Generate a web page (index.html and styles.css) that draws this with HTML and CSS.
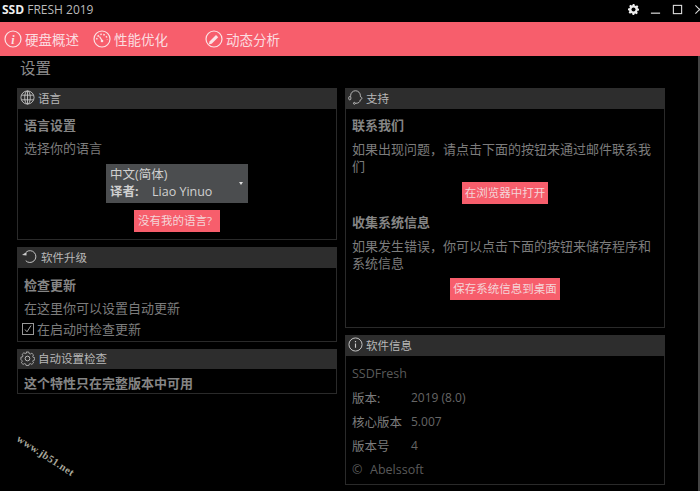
FILE: index.html
```html
<!DOCTYPE html>
<html lang="zh">
<head>
<meta charset="utf-8">
<title>SSD FRESH 2019</title>
<link rel="stylesheet" href="styles.css">
</head>
<body>
<header class="titlebar">
  <div class="title"><b>SSD</b> FRESH 2019</div>
  <div class="winctl">
    <svg class="wi" viewBox="0 0 12 12"><path d="M5 0h2l.4 1.600 1.100.5 1.400-.8 1.400 1.400-.8 1.400.5 1.100L12 5v2l-1.600.4-.5 1.100.8 1.400-1.400 1.400-1.400-.8-1.100.5L7 12H5l-.4-1.600-1.100-.5-1.400.8-1.400-1.400.8-1.400-.5-1.100L0 7V5l1.600-.4.5-1.100-.8-1.400 1.400-1.400 1.400.8 1.100-.5z" fill="#eee"/><circle cx="6" cy="6" r="2.200" fill="#000"/></svg>
    <svg class="wi" viewBox="0 0 12 12"><path d="M1 10h10" stroke="#ddd" stroke-width="1.300"/></svg>
    <svg class="wi" viewBox="0 0 12 12"><rect x="1.500" y="1.500" width="9" height="9" fill="none" stroke="#ddd" stroke-width="1.200"/></svg>
    <svg class="wi" viewBox="0 0 12 12"><path d="M1.500 1.500l9 9M10.500 1.500l-9 9" stroke="#ddd" stroke-width="1.100"/></svg>
  </div>
</header>
<nav class="nav">
  <a class="nav-item ni1"><svg class="nav-ico" viewBox="0 0 18 18"><circle cx="9" cy="9" r="8" fill="none" stroke="#fbe3e5" stroke-width="1.200"/><text x="9" y="13.500" class="ii">i</text></svg>硬盘概述</a>
  <a class="nav-item ni2"><svg class="nav-ico" viewBox="0 0 18 18"><circle cx="9" cy="9" r="8" fill="none" stroke="#fbe3e5" stroke-width="1.200"/><path d="M3.800 9.500A5.200 5.200 0 0 1 14.200 9.500" fill="none" stroke="#fbe3e5" stroke-width="1.500" stroke-dasharray="1.500 1.600"/><path d="M9 10.500L6.500 6.500" stroke="#fbe3e5" stroke-width="1.200"/><circle cx="9" cy="11" r="1.300" fill="#fbe3e5"/></svg>性能优化</a>
  <a class="nav-item ni3"><svg class="nav-ico" viewBox="0 0 18 18"><circle cx="9" cy="9" r="8" fill="none" stroke="#fbe3e5" stroke-width="1.200"/><path d="M4.500 11.500L11 5l2.200 2.200-6.500 6.500-2.800.6z" fill="#fbe3e5"/></svg>动态分析</a>
</nav>
<main class="content">
  <h1 class="page-title">设置</h1>
  <div class="cols">
    <div class="col">
      <section class="panel p-lang">
        <h2 class="panel-head"><svg class="ph-ico" viewBox="0 0 16 16"><g fill="none" stroke="#ccc" stroke-width=".9"><circle cx="8" cy="8" r="7"/><ellipse cx="8" cy="8" rx="3" ry="7"/><path d="M1.800 5.500h12.400M1.800 10.500h12.400M8 1.200v13.600"/></g></svg>语言</h2>
        <div class="panel-body">
          <h3 class="sub">语言设置</h3>
          <p class="txt">选择你的语言</p>
          <div class="select">
            <div class="sel-line">中文(简体)</div>
            <div class="sel-line"><b class="tr-label">译者:</b><span>Liao Yinuo</span></div>
            <span class="caret"></span>
          </div>
          <div class="btn-row"><a class="btn btn-lang">没有我的语言?</a></div>
        </div>
      </section>
      <section class="panel p-upd">
        <h2 class="panel-head"><svg class="ph-ico ph-wide" viewBox="0 0 18 16"><path d="M5.500 3.200A6.300 6.300 0 1 1 5 12.500" fill="none" stroke="#ccc" stroke-width="1"/><path d="M1 6.500l4.800-3.300v3.800z" fill="#ccc"/></svg>软件升级</h2>
        <div class="panel-body">
          <h3 class="sub">检查更新</h3>
          <p class="txt">在这里你可以设置自动更新</p>
          <label class="check"><svg class="cb" viewBox="0 0 12 12"><rect x=".5" y=".5" width="11" height="11" fill="none" stroke="#999"/><path d="M3 6.500l2 2.300L9 2.500" fill="none" stroke="#aaa" stroke-width="1"/></svg>在启动时检查更新</label>
        </div>
      </section>
      <section class="panel p-auto">
        <h2 class="panel-head"><svg class="ph-ico" viewBox="0 0 16 16"><g fill="none" stroke="#ccc" stroke-width=".9"><path d="M6.500 1h3l.5 2 1.300.6 1.800-1 2 2.100-1 1.700.5 1.300 1.900.5v2.800l-1.900.5-.5 1.300 1 1.700-2 2.100-1.800-1-1.300.6-.5 1.800h-3l-.5-1.800-1.300-.6-1.800 1-2-2.100 1-1.700-.5-1.300L.4 10.400V7.600l1.900-.5.500-1.300-1-1.700 2-2.100 1.800 1 1.300-.6z" transform="translate(.6 .2) scale(.92 .85)"/><circle cx="8" cy="8" r="2.500"/></g></svg>自动设置检查</h2>
        <div class="panel-body">
          <h3 class="sub sub-only">这个特性只在完整版本中可用</h3>
        </div>
      </section>
    </div>
    <div class="col">
      <section class="panel p-sup">
        <h2 class="panel-head"><svg class="ph-ico" viewBox="0 0 16 16"><g fill="none" stroke="#ccc" stroke-width=".9"><path d="M2.800 7V6a5.200 5.200 0 0 1 10.400 0v1"/><rect x=".8" y="7" width="2.200" height="3.500" rx="1"/><path d="M13 7c2.400.6 2.400 3 0 3.600M13 10.600c0 2.400-2 3.600-5 3.600"/><circle cx="6.800" cy="14.200" r="1"/></g></svg>支持</h2>
        <div class="panel-body">
          <h3 class="sub">联系我们</h3>
          <p class="txt tall">如果出现问题，请点击下面的按钮来通过邮件联系我们</p>
          <div class="btn-row br-a"><a class="btn">在浏览器中打开</a></div>
          <h3 class="sub sub-b">收集系统信息</h3>
          <p class="txt tall">如果发生错误，你可以点击下面的按钮来储存程序和系统信息</p>
          <div class="btn-row br-b"><a class="btn">保存系统信息到桌面</a></div>
        </div>
      </section>
      <section class="panel p-info">
        <h2 class="panel-head"><svg class="ph-ico" viewBox="0 0 16 16"><circle cx="8" cy="8" r="7" fill="none" stroke="#ccc"/><path d="M8 7v4.500M8 4.200v1.300" stroke="#ccc" stroke-width="1.200"/></svg>软件信息</h2>
        <div class="panel-body info">
          <div class="info-row dim">SSDFresh</div>
          <div class="info-row"><span class="k">版本:</span><span class="v">2019 (8.0)</span></div>
          <div class="info-row"><span class="k">核心版本</span><span class="v">5.007</span></div>
          <div class="info-row"><span class="k">版本号</span><span class="v">4</span></div>
          <div class="info-row dim"><span class="copy">©</span>Abelssoft</div>
        </div>
      </section>
    </div>
  </div>
</main>
<div class="watermark">www.jb51.net</div>
</body>
</html>
```
FILE: styles.css
```css
* { box-sizing: border-box; }
html, body { margin: 0; height: 100%; }
body {
  width: 700px;
  height: 491px;
  overflow: hidden;
  position: relative;
  background: #000;
  color: #a8a8a8;
  font-family: "Open Sans", "Noto Sans CJK SC", sans-serif;
  font-size: 13px;
}
.titlebar {
  height: 22px;
  display: flex;
  align-items: center;
  justify-content: space-between;
  padding: 0 0 4px 2px;
}
.title { font-size: 12px; color: #bbb; }
.title b { color: #eee; }
.winctl { display: flex; gap: 11px; margin-right: -5px; }
.wi { width: 11px; height: 11px; display: block; }
.nav {
  height: 34px;
  background: #f75e6c;
  display: flex;
  align-items: center;
  color: #fbdde0;
  font-size: 13.500px;
}
.nav-item { display: flex; align-items: center; gap: 3px; }
.ni1 { margin-left: 4px; }
.ni2 { margin-left: 14px; }
.ni3 { margin-left: 37px; }
.nav-ico { width: 18px; height: 18px; }
.ii { fill: #fbe3e5; font: italic bold 12px "Liberation Serif", serif; text-anchor: middle; }
.content { height: 435px; padding: 2px 0 0 17px; border-right: 2px solid #444; }
.page-title {
  margin: 0 0 0 3px;
  font-size: 15.500px;
  font-weight: 400;
  line-height: 20px;
  height: 30px;
  color: #8c8c8c;
}
.cols { display: flex; gap: 8px; align-items: flex-start; }
.col { width: 320px; display: flex; flex-direction: column; gap: 7px; }
.panel { border: 1px solid #2a2a2a; border-top: 0; display: flex; flex-direction: column; }
.panel-head {
  margin: 0 -1px;
  height: 21px;
  background: #2d2d2d;
  display: flex;
  align-items: center;
  gap: 3px;
  padding: 0 0 2px 3px;
  font-size: 11.500px;
  font-weight: 400;
  color: #b8b8b8;
}
.ph-ico { width: 15px; height: 15px; flex: none; }
.ph-wide { width: 17px; margin-left: 1px; }
.panel-body { padding: 7px 6px 0; flex: 1; }
.p-lang { height: 152px; }
.p-upd { height: 95px; }
.p-upd .panel-body { padding-top: 8px; }
.p-auto { height: 45px; }
.p-sup { height: 240px; }
.p-info { height: 150px; }
.sub { margin: 0; font-size: 13px; font-weight: 700; line-height: 19px; color: #858585; }
.sub-only { margin-top: -2px; }
.txt { margin: 4px 0 0; line-height: 19px; font-size: 13px; color: #7c7c7c; }
.tall { line-height: 17px; margin-top: 6px; }
.select {
  position: relative;
  width: 142px;
  height: 39px;
  margin: 6px 0 0 82px;
  background: #4b4d4f;
  color: #d0d0d0;
  padding: 2px 4px;
  line-height: 17px;
  font-size: 12.500px;
}
.sel-line { white-space: nowrap; display: flex; }
.tr-label { width: 42px; }
.caret {
  position: absolute;
  right: 5px;
  top: 18px;
  border: 2.500px solid transparent;
  border-top: 3px solid #ddd;
}
.btn-row { display: flex; justify-content: center; margin-top: 7px; }
.btn {
  display: block;
  height: 22px;
  line-height: 21px;
  padding: 0 3px;
  background: #f75e6c;
  color: #f4d5d8;
  font-size: 11.500px;
}
.btn-lang { padding: 0 8px 0 4px; }
.br-a { margin-top: 7px; }
.sub-b { margin-top: 9px; }
.br-b { margin-top: 6px; }
.check { display: flex; align-items: center; gap: 3px; margin: 1px 0 0 -2px; line-height: 20px; font-size: 13px; color: #7c7c7c; }
.cb { width: 12px; height: 12px; }
.info { padding-top: 5px; }
.info-row { display: flex; height: 24px; align-items: center; font-size: 12.500px; color: #7c7c7c; white-space: nowrap; }
.k { width: 59px; }
.v { color: #666; font-size: 12px; }
.dim { color: #5a5a5a; }
.copy { width: 18px; }
.watermark {
  position: absolute;
  left: 21px;
  top: 433px;
  color: #a8a89c;
  font: 700 10.500px "Liberation Serif", serif;
  letter-spacing: .4px;
  transform: rotate(33deg);
  transform-origin: left top;
}
```
